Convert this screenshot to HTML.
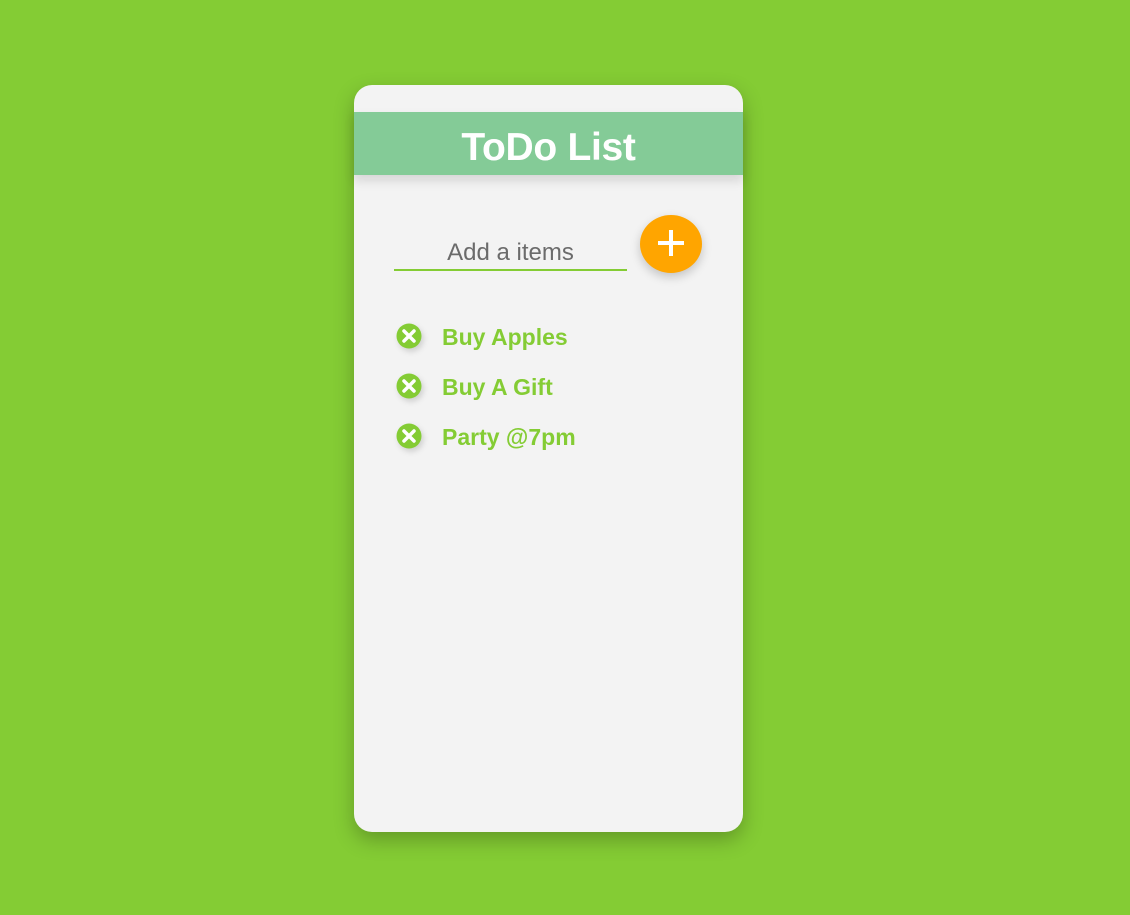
<!DOCTYPE html>
<html><head><style>
body{margin:0;background:#84cc34;width:1130px;height:915px;position:relative;font-family:"Liberation Sans",sans-serif;overflow:hidden}
.card{position:absolute;left:354px;top:85px;width:389px;height:747px;background:#f3f3f3;border-radius:18px;box-shadow:0 8px 20px rgba(0,0,0,.25)}
.hdr{position:absolute;left:0;top:27px;width:389px;height:63px;background:#84cb97;box-shadow:0 6px 10px rgba(0,0,0,.12);color:#fff;font-weight:bold;font-size:39px;text-align:center;line-height:72px;letter-spacing:-0.3px}
.inp{position:absolute;left:40px;top:152px;width:233px;height:32px;border-bottom:2px solid #84cc34;text-align:center;font-size:24px;color:#6b6b6b;line-height:32px}
.btn{position:absolute;left:286px;top:130px;width:62px;height:58px;border-radius:50%;background:#ffa500;box-shadow:0 4px 10px rgba(0,0,0,.2)}
.btn:before,.btn:after{content:"";position:absolute;background:#fff;left:18px;top:26px;width:26px;height:4px}
.btn:after{left:29px;top:15px;width:4px;height:26px}
.it{position:absolute;left:42px;font-size:23px;color:#84cc34;font-weight:bold;height:30px;line-height:30px}
.it svg{position:absolute;left:0;top:1px;filter:drop-shadow(2px 3px 3px rgba(0,0,0,.15))}
.it span{position:absolute;left:46px;white-space:nowrap}
</style></head><body>
<div class="card">
<div class="hdr">ToDo List</div>
<div class="inp">Add a items</div>
<div class="btn"></div>
<div class="it" style="top:237px"><svg width="26" height="26" viewBox="0 0 26 26"><circle cx="13" cy="13" r="12.5" fill="#84cc34"/><path d="M8 8L18 18M18 8L8 18" stroke="#fff" stroke-width="3.5" stroke-linecap="round"/></svg><span>Buy Apples</span></div>
<div class="it" style="top:287px"><svg width="26" height="26" viewBox="0 0 26 26"><circle cx="13" cy="13" r="12.5" fill="#84cc34"/><path d="M8 8L18 18M18 8L8 18" stroke="#fff" stroke-width="3.5" stroke-linecap="round"/></svg><span>Buy A Gift</span></div>
<div class="it" style="top:337px"><svg width="26" height="26" viewBox="0 0 26 26"><circle cx="13" cy="13" r="12.5" fill="#84cc34"/><path d="M8 8L18 18M18 8L8 18" stroke="#fff" stroke-width="3.5" stroke-linecap="round"/></svg><span>Party @7pm</span></div>
</div>
</body></html>
